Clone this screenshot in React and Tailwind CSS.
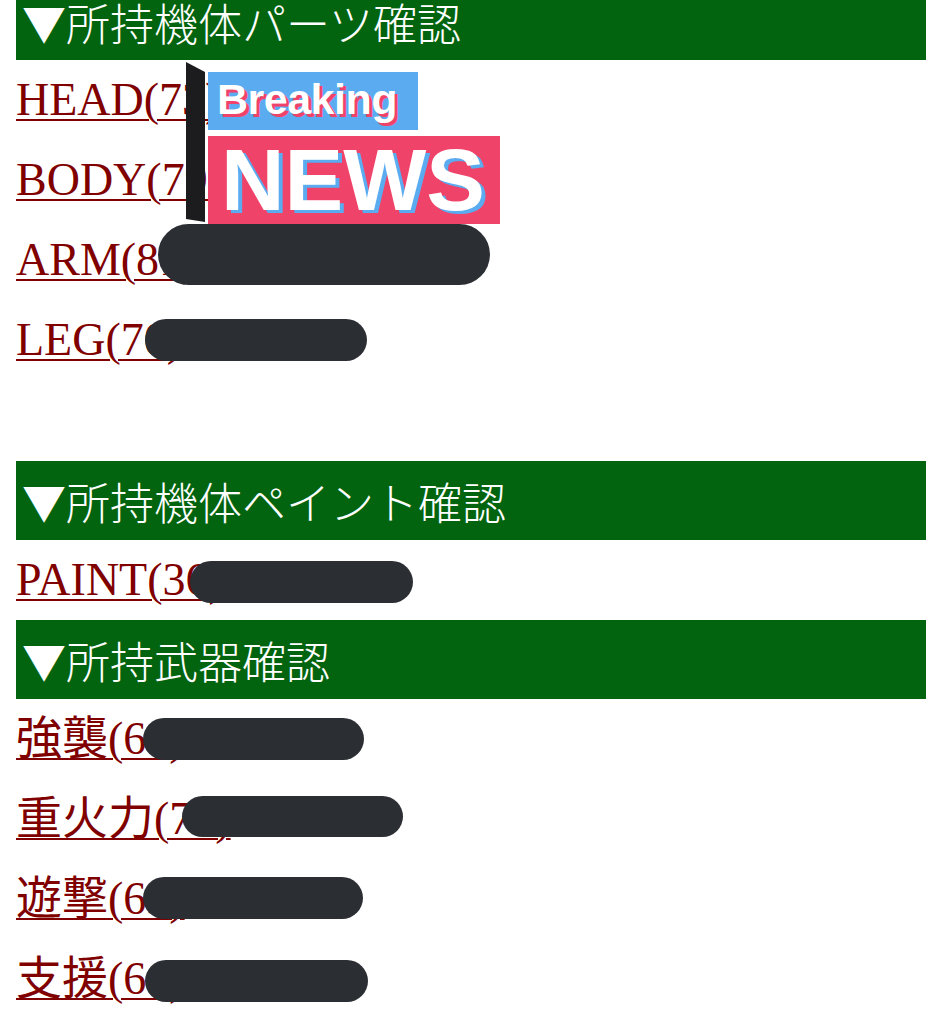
import React from "react";

const serif = "font-['Liberation_Serif','Noto_Sans_CJK_JP',serif]";

// pill offsets are relative to the row, which already sits 16px in
const partRows = [
  { label: "HEAD(73)", pill: null },
  { label: "BODY(79)", pill: null },
  { label: "ARM(81)", pill: "left-[142px] top-[4px] w-[332px] h-[61px]" },
  { label: "LEG(70)", pill: "left-[129px] top-[19px] w-[222px] h-[42px]" },
];

const paintRows = [
  { label: "PAINT(36)", pill: "left-[174px] top-[21px] w-[223px] h-[42px]" },
];

const weaponRows = [
  { label: "強襲(64)", pill: "left-[127px] top-[19px] w-[221px] h-[42px]" },
  { label: "重火力(72)", pill: "left-[166px] top-[17px] w-[221px] h-[41px]" },
  { label: "遊撃(63)", pill: "left-[127px] top-[18px] w-[220px] h-[42px]" },
  { label: "支援(66)", pill: "left-[129px] top-[21px] w-[223px] h-[42px]" },
];

function SectionBar({ title, first }) {
  // the top bar is scrolled partly out of view, so it is shorter
  return (
    <div
      className={`bg-[#03640f] flex pl-[6px] ${first ? "h-[60px] items-end pb-4" : "h-[79px] items-center"}`}
    >
      <span className="text-white text-[44px] leading-none font-['Noto_Sans_CJK_JP',sans-serif] font-light">
        ▼{title}
      </span>
    </div>
  );
}

function LinkRow({ label, pill }) {
  return (
    <div className="relative h-[80px] flex items-center">
      <a
        href="#"
        className={`${serif} text-[46px] leading-none text-[#800000] underline decoration-[2px] underline-offset-[4px]`}
      >
        {label}
      </a>
      {pill && <span className={`absolute rounded-full bg-[#2b2e33] ${pill}`} />}
    </div>
  );
}

function BreakingNews() {
  return (
    <div className="absolute left-[186px] top-[62px] w-[314px] h-[162px]">
      <svg className="absolute left-0 top-0" width="19" height="162" viewBox="0 0 19 162">
        <polygon points="0,0 19,10 19,160 0,157" fill="#1c1c1e" />
      </svg>
      <div className="absolute left-[22px] top-[10px] w-[210px] h-[58px] bg-[#5aabef] flex items-center pl-[9px] pb-[3px]">
        <span className="font-['Liberation_Sans',Arial,sans-serif] font-bold text-[43px] leading-none tracking-[-0.5px] text-white [text-shadow:3px_3px_0_#f0436a]">
          Breaking
        </span>
      </div>
      <div className="absolute left-[22px] top-[74px] w-[292px] h-[88px] bg-[#f0436a] flex items-center pl-[13px]">
        <span className="font-['Liberation_Sans',Arial,sans-serif] font-bold text-[88px] leading-none text-white [text-shadow:4px_3px_0_#5aabef]">
          NEWS
        </span>
      </div>
    </div>
  );
}

export default function App() {
  return (
    <div className="relative min-h-screen bg-white overflow-hidden">
      <div className="px-4">
        <SectionBar title="所持機体パーツ確認" first />
        {partRows.map((r) => (
          <LinkRow key={r.label} {...r} />
        ))}
        <div className="h-[81px]" />
        <SectionBar title="所持機体ペイント確認" />
        {paintRows.map((r) => (
          <LinkRow key={r.label} {...r} />
        ))}
        <SectionBar title="所持武器確認" />
        {weaponRows.map((r) => (
          <LinkRow key={r.label} {...r} />
        ))}
      </div>
      <BreakingNews />
    </div>
  );
}
